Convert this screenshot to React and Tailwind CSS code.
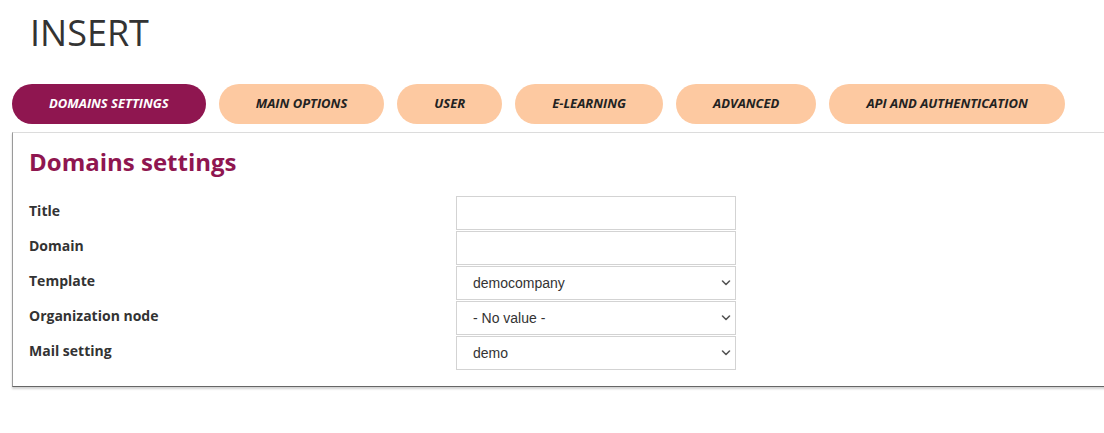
import React, { useState } from 'react';

const tabs = [
  'Domains settings',
  'Main options',
  'User',
  'E-learning',
  'Advanced',
  'API and authentication',
];

const fields = [
  { label: 'Title', type: 'text' },
  { label: 'Domain', type: 'text' },
  { label: 'Template', type: 'select', options: ['democompany'] },
  { label: 'Organization node', type: 'select', options: ['- No value -'] },
  { label: 'Mail setting', type: 'select', options: ['demo'] },
];

const Chevron = () => (
  <svg
    width="10"
    height="7"
    viewBox="0 0 10 7"
    className="pointer-events-none absolute right-[5px] top-1/2 -translate-y-1/2"
  >
    <path d="M1.5 1.5 L5 5 L8.5 1.5" fill="none" stroke="#555" strokeWidth="1.6" strokeLinecap="round" strokeLinejoin="round" />
  </svg>
);

const Field = ({ field }) => {
  if (field.type === 'text') {
    return (
      <input
        type="text"
        className="h-[34px] w-[280px] border border-[#d3d3d3] bg-white px-4 text-[14px] text-[#333] outline-none font-['Liberation_Sans',Arial,sans-serif]"
      />
    );
  }
  return (
    <div className="relative w-[280px]">
      <select
        defaultValue={field.options[0]}
        className="h-[34px] w-full appearance-none border border-[#d3d3d3] bg-white pl-4 pr-6 text-[14px] text-[#333] outline-none font-['Liberation_Sans',Arial,sans-serif]"
      >
        {field.options.map((o) => (
          <option key={o}>{o}</option>
        ))}
      </select>
      <Chevron />
    </div>
  );
};

const App = () => {
  const [active, setActive] = useState(0);

  return (
    <div className="min-h-screen w-full overflow-hidden bg-white px-[12px] font-['Open_Sans',sans-serif]">
      <h1 className="pl-[18px] pt-[11px] text-[36px] font-normal leading-[44px] text-[#333]">INSERT</h1>

      <div className="mt-[29px] flex gap-[13px]">
        {tabs.map((t, i) => (
          <button
            key={t}
            onClick={() => setActive(i)}
            className={
              'h-[40px] rounded-full px-[37px] text-[13px] font-bold italic uppercase ' +
              (i === active ? 'bg-[#8f1650] text-white' : 'bg-[#fdc9a1] text-[#222]')
            }
          >
            {t}
          </button>
        ))}
      </div>

      <div className="mt-[8px] w-[1120px] border-t border-l border-b border-t-[#dcdcdc] border-l-[#9a9a9a] border-b-[#666] px-[16px] pt-[13px] pb-[16px] shadow-[0_2px_2px_rgba(0,0,0,0.18)]">
        <h2 className="text-[24px] font-bold leading-[32px] text-[#8f1650]">Domains settings</h2>

        <div className="mt-[18px] flex flex-col gap-[1px]">
          {fields.map((f) => (
            <div key={f.label} className="flex items-start">
              <label className="w-[427px] pt-[4px] text-[14px] font-bold leading-[21px] text-[#333]">{f.label}</label>
              <Field field={f} />
            </div>
          ))}
        </div>
      </div>
    </div>
  );
};

export default App;
